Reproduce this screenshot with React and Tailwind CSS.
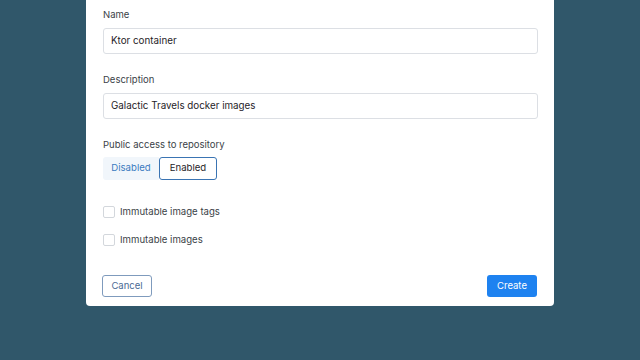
import React from "react";

function Field({ label, value }) {
  return (
    <div className="flex flex-col">
      <label className="text-[9.5px] leading-[14px] text-[#3a3f47]">{label}</label>
      <div className="mt-[6px] h-[26px] border border-[#dcdfe4] rounded-[3px] flex items-center px-[7px] text-[9.8px] text-[#1f2328]">
        {value}
      </div>
    </div>
  );
}

function Check({ label }) {
  return (
    <div className="flex items-center gap-[5px] h-[14px]">
      <div className="w-[12px] h-[12px] border border-[#d3d7dc] rounded-[2px] bg-white" />
      <span className="text-[9.6px] text-[#3a3f47]">{label}</span>
    </div>
  );
}

export default function App() {
  return (
    <div className="w-[640px] h-[360px] bg-[#30576a] flex justify-center overflow-hidden" style={{ fontFamily: "Inter, 'Noto Sans', sans-serif" }}>
      <div className="w-[468px] h-[306px] bg-white rounded-b-[4px] pl-[17px] pr-[16px] pt-[8px] flex flex-col">
        <Field label="Name" value="Ktor container" />
        <div className="mt-[19px]">
          <Field label="Description" value="Galactic Travels docker images" />
        </div>
        <div className="mt-[19px] flex flex-col">
          <label className="text-[9.5px] leading-[14px] text-[#3a3f47]">Public access to repository</label>
          <div className="mt-[5px] flex h-[23px]">
            <div className="w-[56px] bg-[#f1f6fb] text-[#3b7bc0] text-[9.6px] flex items-center justify-center rounded-l-[3px]">Disabled</div>
            <div className="w-[58px] border border-[#3a74b3] rounded-[3px] text-[9.6px] text-[#1f2328] flex items-center justify-center">Enabled</div>
          </div>
        </div>
        <div className="mt-[25px] flex flex-col gap-[14px]">
          <Check label="Immutable image tags" />
          <Check label="Immutable images" />
        </div>
        <div className="mt-auto mb-[9px] mr-px flex justify-between">
          <button className="w-[50px] h-[22px] border border-[#7f9bbd] rounded-[3px] text-[9.5px] text-[#4a6a94] -ml-px">Cancel</button>
          <button className="w-[50px] h-[22px] bg-[#1e82f0] rounded-[3px] text-[9.5px] text-white">Create</button>
        </div>
      </div>
    </div>
  );
}
